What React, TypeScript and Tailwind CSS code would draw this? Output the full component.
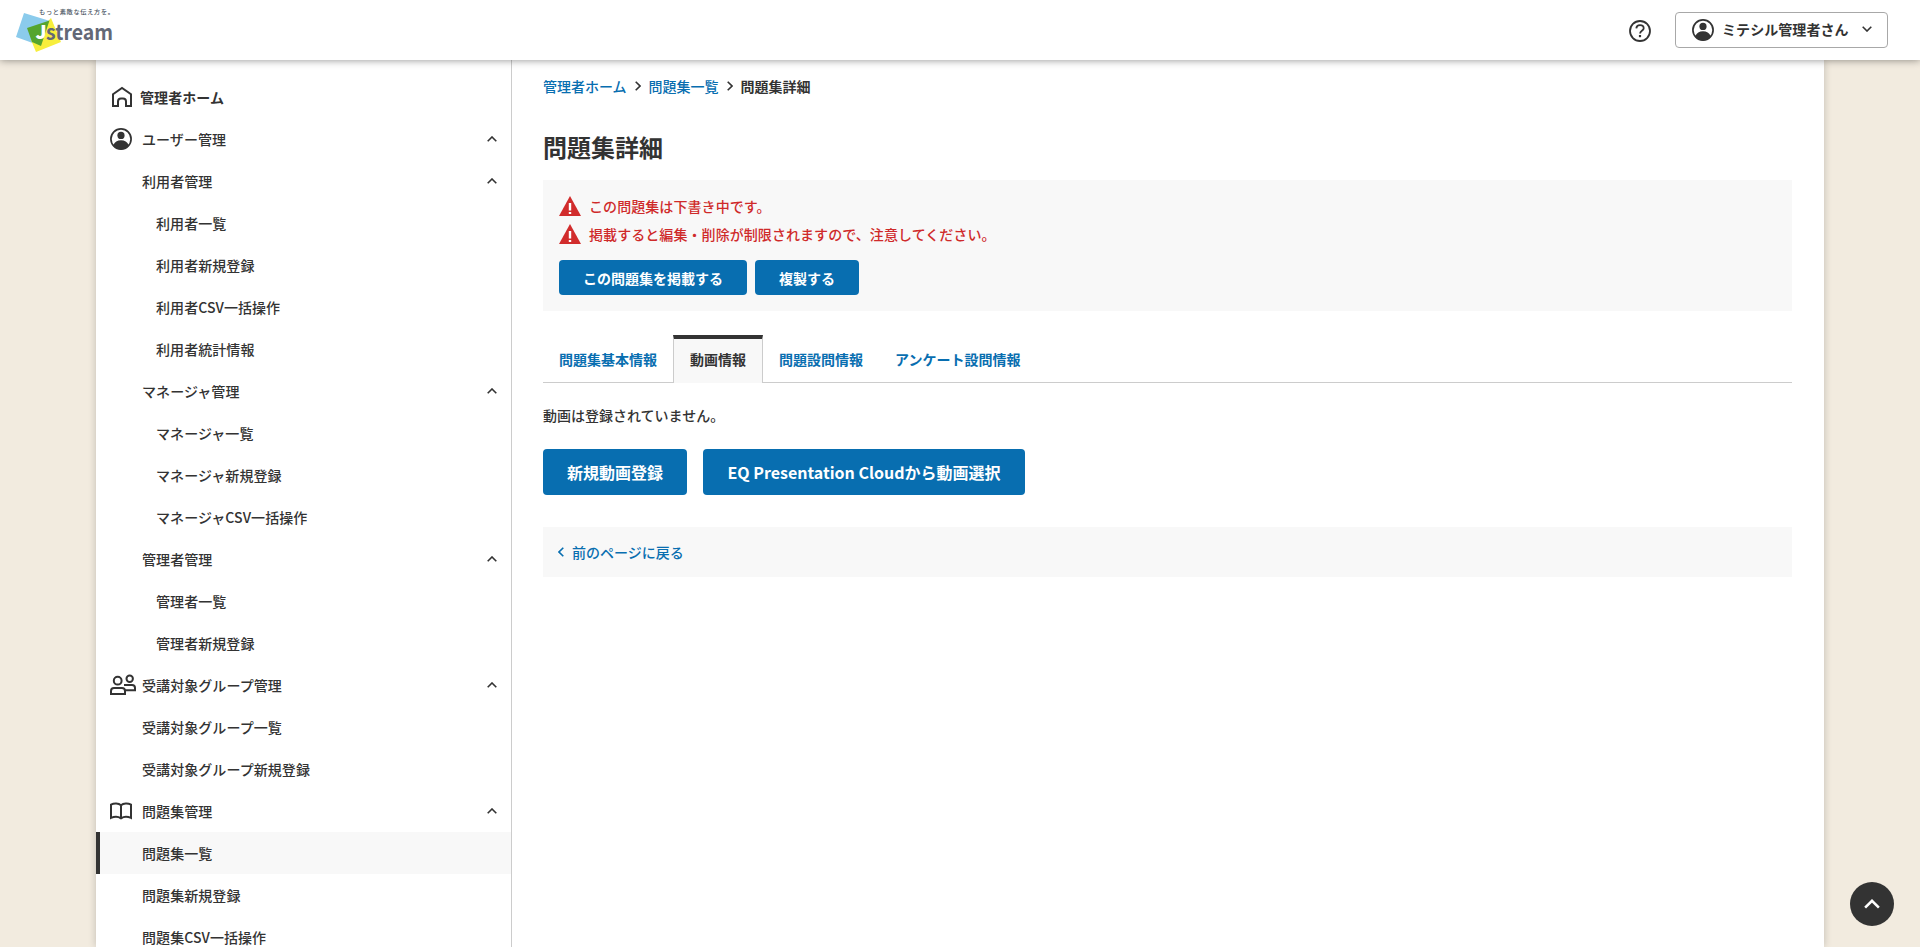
type NavItem = {
  label: string;
  level: number;
  icon?: 'home' | 'user' | 'group' | 'book';
  open?: boolean;
  bold?: boolean;
  active?: boolean;
};

const navItems: NavItem[] = [
  { label: '管理者ホーム', level: 1, icon: 'home', bold: true },
  { label: 'ユーザー管理', level: 1, icon: 'user', open: true },
  { label: '利用者管理', level: 2, open: true },
  { label: '利用者一覧', level: 3 },
  { label: '利用者新規登録', level: 3 },
  { label: '利用者CSV一括操作', level: 3 },
  { label: '利用者統計情報', level: 3 },
  { label: 'マネージャ管理', level: 2, open: true },
  { label: 'マネージャ一覧', level: 3 },
  { label: 'マネージャ新規登録', level: 3 },
  { label: 'マネージャCSV一括操作', level: 3 },
  { label: '管理者管理', level: 2, open: true },
  { label: '管理者一覧', level: 3 },
  { label: '管理者新規登録', level: 3 },
  { label: '受講対象グループ管理', level: 1, icon: 'group', open: true },
  { label: '受講対象グループ一覧', level: 2 },
  { label: '受講対象グループ新規登録', level: 2 },
  { label: '問題集管理', level: 1, icon: 'book', open: true },
  { label: '問題集一覧', level: 2, active: true },
  { label: '問題集新規登録', level: 2 },
  { label: '問題集CSV一括操作', level: 2 },
];

const tabs = ['問題集基本情報', '動画情報', '問題設問情報', 'アンケート設問情報'];

const UserIcon = () => (
  <svg viewBox="0 0 22 22" className="w-[22px] h-[22px] shrink-0">
    <circle cx="11" cy="11" r="10.1" fill="none" stroke="#333" strokeWidth="1.7" />
    <circle cx="11" cy="7.4" r="3.6" fill="#333" />
    <path d="M3.3 17.2C4.6 13.9 7.4 12.2 11 12.2s6.4 1.7 7.7 5C16.9 20 14.2 21.5 11 21.5S5.1 20 3.3 17.2z" fill="#333" />
  </svg>
);

const NavIcon = ({ name }: { name: NavItem['icon'] }) => {
  if (name === 'home') {
    return (
      <svg viewBox="0 0 22 22" className="w-[22px] h-[22px] ml-px" fill="none" stroke="#333" strokeWidth="2">
        <path d="M2 8.3 11 2l9 6.3V20h-5v-4.5q0-3-3-3h-2q-3 0-3 3V20H2z" />
      </svg>
    );
  }
  if (name === 'user') return <UserIcon />;
  if (name === 'group') {
    return (
      <svg viewBox="0 0 26 22" className="w-[26px] h-[22px]" fill="none" stroke="#333" strokeWidth="2">
        <circle cx="7.7" cy="6.7" r="3.9" />
        <circle cx="19.7" cy="4.7" r="3.2" />
        <path d="M1 20v-3a3 3 0 0 1 3-3h8a3 3 0 0 1 3 3v3z" />
        <path d="M14 11h8a3 3 0 0 1 3 3v2.200H15" />
      </svg>
    );
  }
  return (
    <svg viewBox="0 0 22 18" className="w-[22px] h-[18px]" fill="none" stroke="#333" strokeWidth="2">
      <path d="M11 3.2C8.5 1 4 1 1 2.6v13.3c3-1.3 7.5-1.3 10 .4 2.5-1.7 7-1.7 10-.4V2.6C18 1 13.5 1 11 3.2zM11 3v13" />
    </svg>
  );
};

const Chevron = ({ className }: { className: string }) => (
  <svg viewBox="0 0 10 6" className={className} fill="none" stroke="currentColor" strokeWidth="1.6">
    <path d="M.7 5.3 5 1l4.3 4.3" />
  </svg>
);

const Logo = () => (
  <svg viewBox="0 0 110 60" className="h-[60px] w-[110px] overflow-visible">
    <path d="M9 13l26 8-9 25-25-9z" fill="#8bcbec" />
    <path d="M36 18l10 24-25 10-5-12z" fill="#f7ee3c" />
    <path d="M12 28l22.500-7.500L26 46l-9-4z" fill="#55a52e" />
    <text x="24" y="13.5" textLength="75" fontSize="6.2" fill="#4b5563">もっと素敵な伝え方を。</text>
    <text x="20.500" y="38.500" fontSize="19" fontWeight="900" fill="#fff">J</text>
    <text x="31" y="40" textLength="67" lengthAdjust="spacingAndGlyphs" fontSize="21" fontWeight="700" fill="#636876">stream</text>
  </svg>
);

const Header = () => (
  <header className="relative z-10 flex h-[60px] items-center justify-between bg-white pl-[15px] pr-8 shadow-[0_0_8px_rgba(0,0,0,0.45)]">
    <Logo />
    <div className="flex items-center">
      <svg viewBox="0 0 22 22" className="mr-6 mt-0.5 h-[22px] w-[22px]" fill="none" stroke="#333" strokeWidth="1.8">
        <circle cx="11" cy="11" r="10" />
        <path d="M7.3 8.3c.2-2 1.7-3.2 3.7-3.2s3.7 1.2 3.7 3.1c0 2.5-3.6 2.7-3.6 5.2" />
        <path d="M11 15v2.2" strokeWidth="2.2" />
      </svg>
      <button className="flex h-9 w-[213px] items-center rounded border border-[#a8a8a8] pl-4 text-sm font-bold">
        <UserIcon />
        <span className="ml-2 flex-1 pb-0.5 text-left tracking-[0.005em]">ミテシル管理者さん</span>
        <Chevron className="mr-[15px] mb-0.5 h-1.5 w-2.5 rotate-180" />
      </button>
    </div>
  </header>
);

const Sidebar = () => (
  <nav className="w-[416px] shrink-0 border-r border-[#ccc] pt-4">
    {navItems.map((item) => (
      <div
        key={item.label}
        className={`flex h-[42px] items-center border-l-4 pl-2.5 pr-[14px] text-sm tracking-[0.005em] ${
          item.active ? 'border-[#333] bg-[#f8f8f8]' : 'border-transparent'
        }`}
      >
        <span className={item.bold ? 'w-[30px] shrink-0' : item.level === 3 ? 'w-[46px] shrink-0' : 'w-8 shrink-0'}>
          {item.icon && <NavIcon name={item.icon} />}
        </span>
        <span className={item.bold ? 'flex-1 font-bold' : 'flex-1'}>{item.label}</span>
        {item.open && <Chevron className="h-1.5 w-2.5" />}
      </div>
    ))}
  </nav>
);

const Warning = ({ text }: { text: string }) => (
  <p className="flex h-7 items-center text-sm tracking-[0.005em] text-[#cf2a2a]">
    <svg viewBox="0 0 22 20" className="mr-2 h-5 w-[22px]">
      <path d="M11 0l11 20H0z" fill="#d12c2c" />
      <path d="M11 7v7.5M11 16v2" stroke="#fff" strokeWidth="2.4" />
    </svg>
    {text}
  </p>
);

export default function App() {
  return (
    <div className="h-[947px] overflow-hidden bg-[#f2ebdf] font-['Noto_Sans_CJK_JP',sans-serif] font-medium text-[#333]">
      <Header />
      <div className="mx-24 flex h-[887px] bg-white shadow-[0_0_8px_rgba(0,0,0,0.2)]">
        <Sidebar />
        <main className="flex-1 pl-[31px] pr-8">
          <div className="mt-[15px] flex h-[21px] items-center text-sm">
            <a className="text-[#086eb0]">管理者ホーム</a>
            <Chevron className="mx-1.5 h-1.5 w-2.5 rotate-90" />
            <a className="text-[#086eb0]">問題集一覧</a>
            <Chevron className="mx-1.5 h-1.5 w-2.5 rotate-90" />
            <span className="font-bold">問題集詳細</span>
          </div>
          <h1 className="mt-[33px] h-9 text-2xl leading-9 font-bold">問題集詳細</h1>

          <section className="mt-[15px] h-[131px] bg-[#f8f8f8] px-4 pt-3">
            <Warning text="この問題集は下書き中です。" />
            <Warning text="掲載すると編集・削除が制限されますので、注意してください。" />
            <div className="mt-3 flex gap-2 text-sm font-bold text-white">
              <button className="h-[35px] w-[188px] rounded bg-[#086eb0]">この問題集を掲載する</button>
              <button className="h-[35px] w-[104px] rounded bg-[#086eb0]">複製する</button>
            </div>
          </section>

          <div className="mt-6 flex h-12 border-b border-[#ccc] text-sm font-bold">
            {tabs.map((tab) => (
              <a
                key={tab}
                className={
                  tab === '動画情報'
                    ? '-mb-px flex items-center border-x border-t-4 border-x-[#ccc] border-t-[#333] bg-[#f8f8f8] px-4 pb-1'
                    : 'flex items-center px-4 pt-px text-[#086eb0]'
                }
              >
                {tab}
              </a>
            ))}
          </div>

          <p className="mt-[22px] text-sm leading-[21px]">動画は登録されていません。</p>
          <div className="mt-[23px] flex gap-4 font-bold text-white">
            <button className="h-[46px] w-36 rounded bg-[#086eb0]">新規動画登録</button>
            <button className="h-[46px] w-[322px] rounded bg-[#086eb0]">EQ Presentation Cloudから動画選択</button>
          </div>

          <div className="mt-8 flex h-[50px] items-center bg-[#f8f8f8] pl-[13px] text-sm text-[#086eb0]">
            <Chevron className="mr-1.5 h-1.5 w-2.5 -rotate-90" />
            前のページに戻る
          </div>
        </main>
      </div>
      <button className="fixed right-[26px] bottom-[21px] flex h-11 w-11 items-center justify-center rounded-full bg-[#333] text-white">
        <Chevron className="h-2.5 w-4" />
      </button>
    </div>
  );
}
